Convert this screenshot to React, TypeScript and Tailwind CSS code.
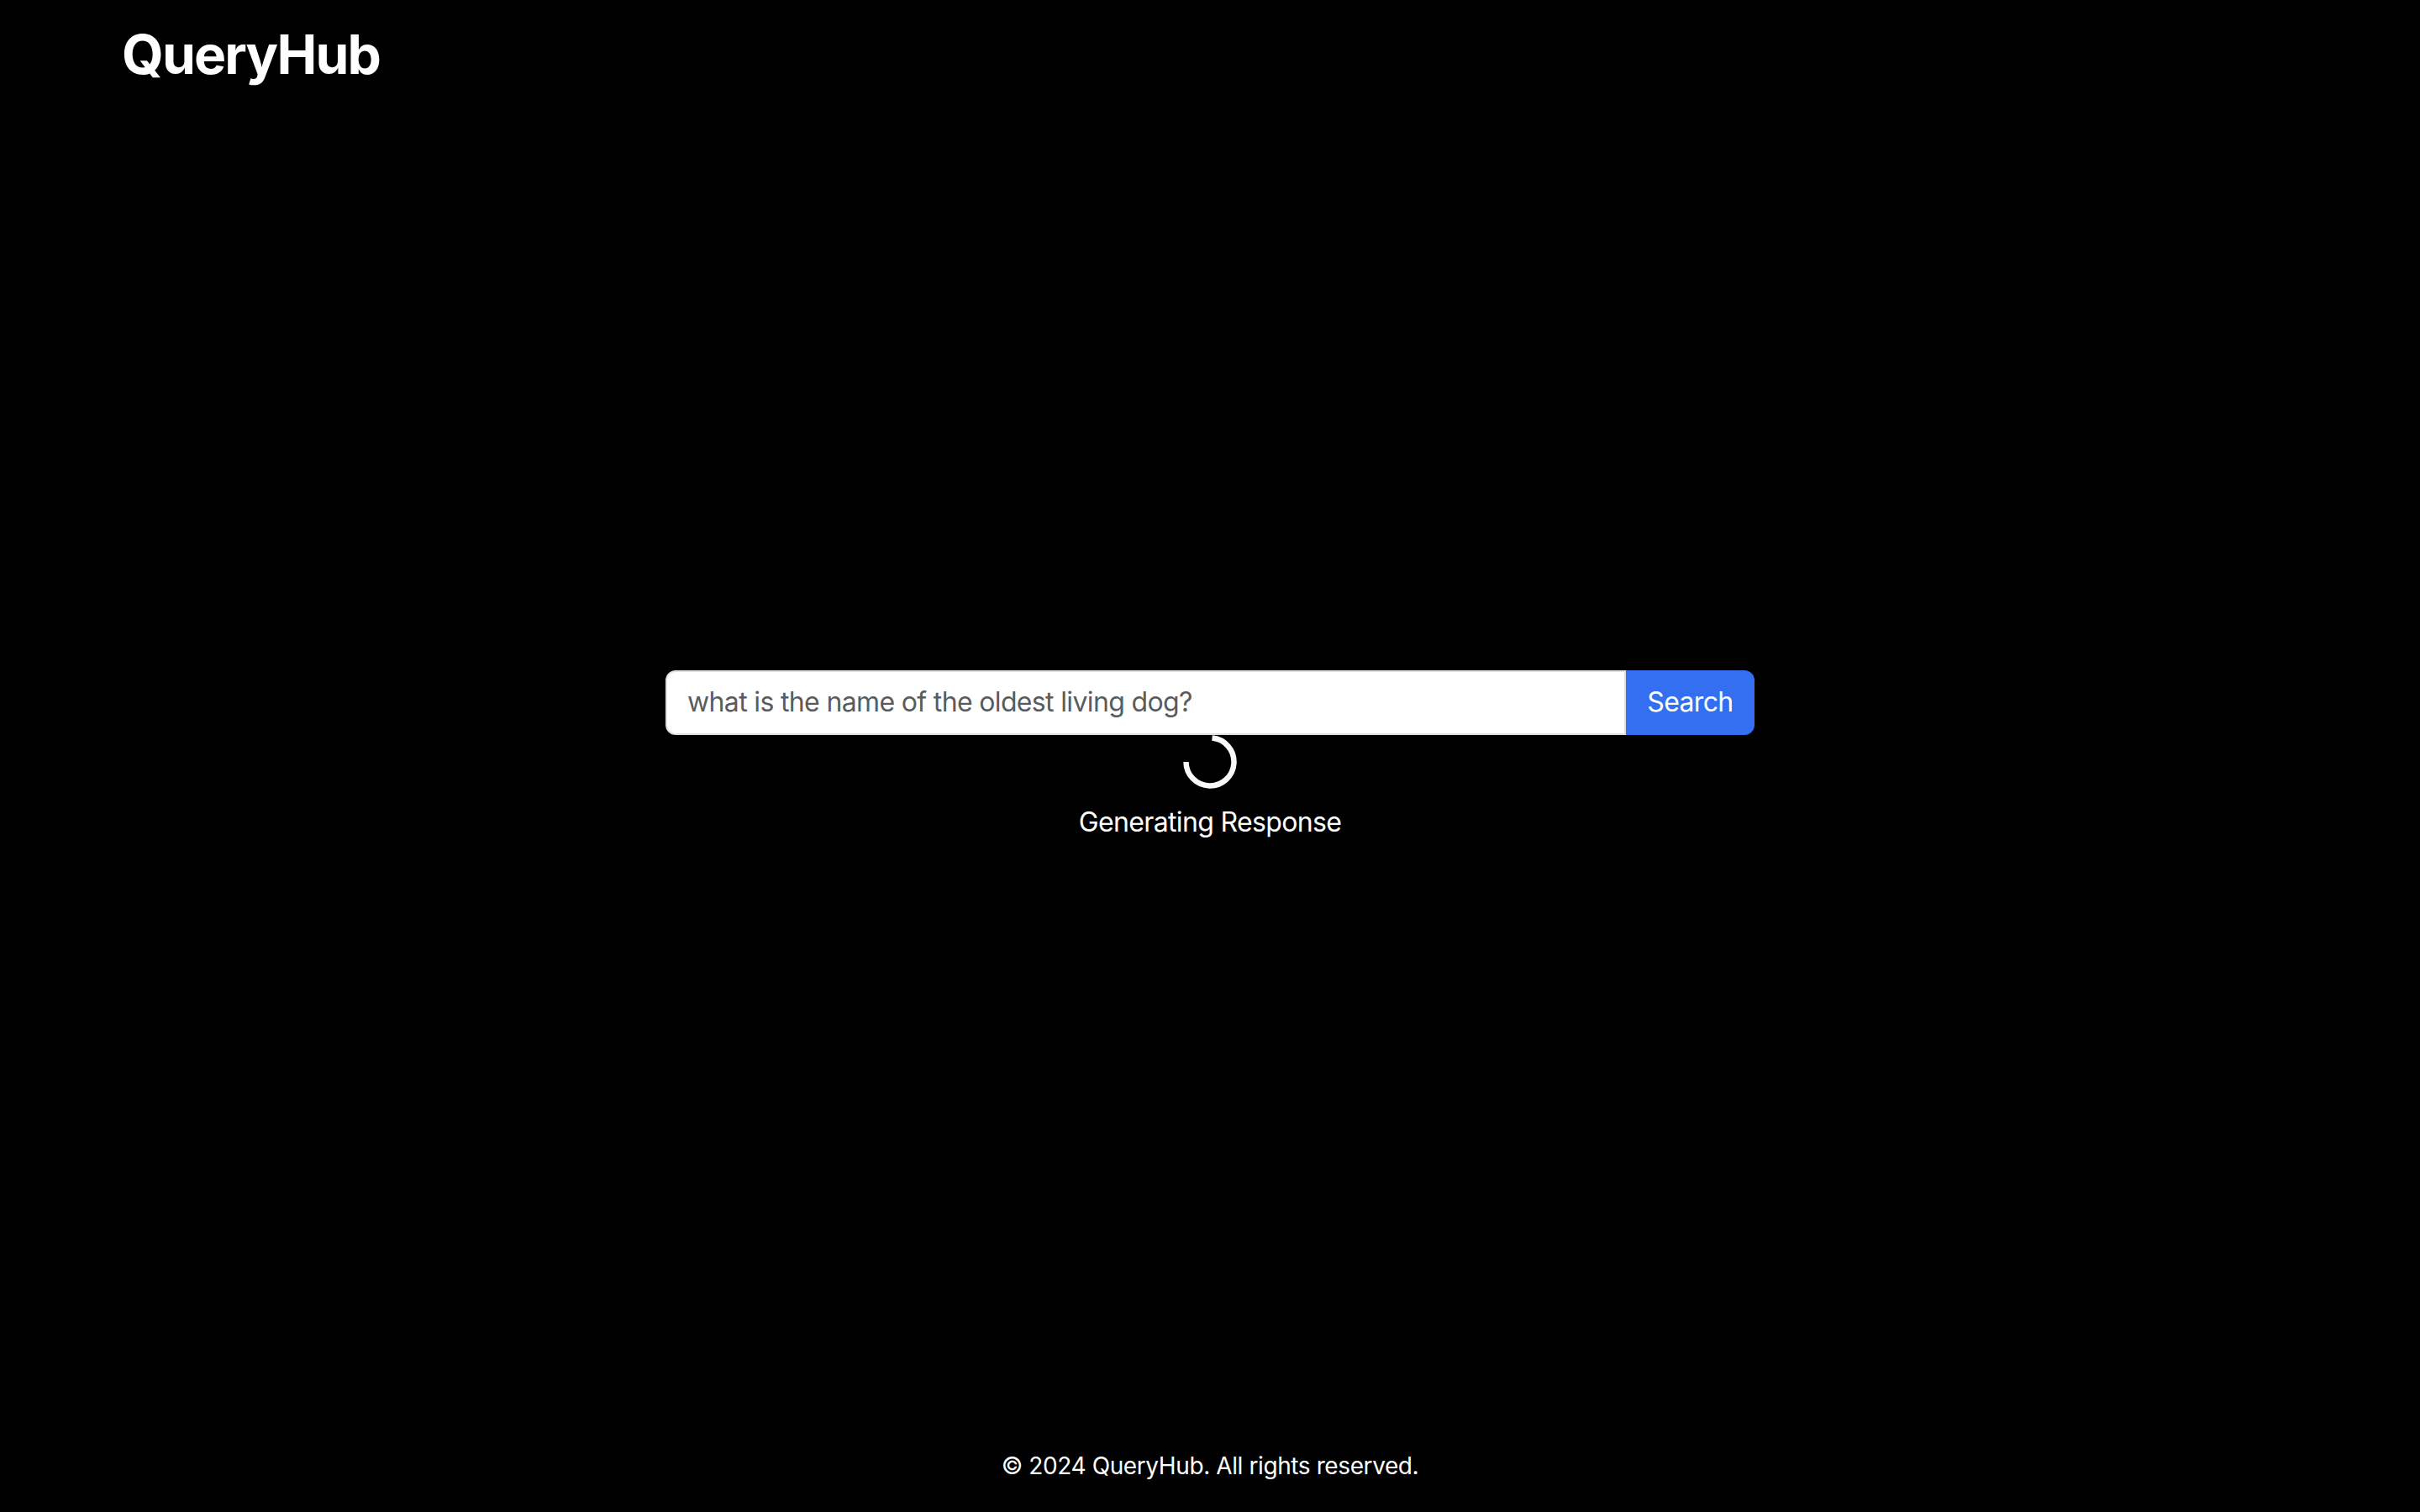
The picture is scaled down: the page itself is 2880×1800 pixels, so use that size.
import React from "react";

export default function App() {
  return (
    <div
      className="h-screen w-full bg-black text-white flex flex-col"
      style={{ fontFamily: "Inter, 'Noto Sans', sans-serif" }}
    >
      <header className="h-[110px] pl-[145px] pt-[27px]">
        <h1 className="text-[64px] leading-[1.2] font-bold tracking-[-1.8px]">QueryHub</h1>
      </header>
      <main className="flex-1 flex flex-col items-center justify-center">
        <div className="flex w-[1296px] h-[77px]">
          <div className="flex-1 flex items-center bg-white border-2 border-[#dee2e6] rounded-l-[12px] px-[24px]">
            <span className="text-[32px] text-[#595c5f] leading-[48px] tracking-[-0.65px]">what is the name of the oldest living dog?</span>
          </div>
          <div className="w-[153px] flex items-center justify-center bg-[#336ff0] rounded-r-[12px]">
            <span className="text-[32px] text-white leading-[48px] tracking-[-0.65px]">Search</span>
          </div>
        </div>
        <svg width="64" height="64" viewBox="0 0 64 64" className="block">
          <path
            d="M34.5 3.6 A28.5 28.5 0 1 1 3.5 32"
            fill="none"
            stroke="#f8f9fa"
            strokeWidth="6.5"
          />
        </svg>
        <p className="mt-[16px] text-[32px] leading-[48px] tracking-[-0.65px]">Generating Response</p>
      </main>
      <footer className="h-[110px] flex items-center justify-center">
        <p className="text-[28px] leading-[42px] tracking-[-0.4px]">© 2024 QueryHub. All rights reserved.</p>
      </footer>
    </div>
  );
}
